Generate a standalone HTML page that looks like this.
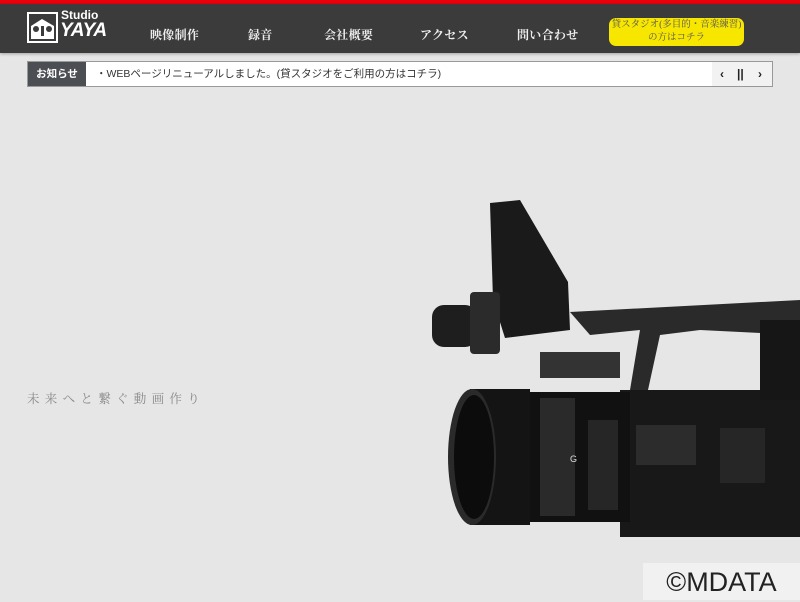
<!DOCTYPE html>
<html><head><meta charset="utf-8"><style>
*{margin:0;padding:0;box-sizing:border-box}
body{width:800px;height:600px;overflow:hidden;background:#e6e6e6;font-family:"Liberation Sans","Noto Sans CJK JP",sans-serif;position:relative}
.top{position:absolute;left:0;top:0;width:800px;height:4px;background:#e8000b}
.hdr{position:absolute;left:0;top:4px;width:800px;height:49px;background:#3b3b3b;box-shadow:0 1px 3px rgba(0,0,0,.3)}
.nav{position:absolute;top:26px;color:#eee;font-family:"Liberation Serif","Noto Serif CJK SC",serif;font-size:12px;font-weight:bold;letter-spacing:0.3px}
.btn{position:absolute;left:609px;top:18px;width:135px;height:28px;background:#f7e600;border-radius:7px;color:#555;font-family:"Liberation Serif","Noto Serif CJK SC",serif;font-size:9.5px;text-align:center;line-height:13px;padding-top:1px}
.ntc{position:absolute;left:27px;top:61px;width:746px;height:26px;background:#fff;border:1px solid #999}
.lab{position:absolute;left:0;top:0;width:58px;height:24px;background:#4b4e53;color:#fff;font-size:10.5px;font-weight:bold;text-align:center;line-height:24px}
.msg{position:absolute;left:68px;top:0;line-height:24px;font-size:10.5px;color:#333}
.ctl{position:absolute;right:0;top:0;width:60px;height:24px;background:#f2f2f2;font-size:12px;font-weight:bold;color:#222;line-height:24px}
.tag{position:absolute;left:27px;top:389px;font-family:"Liberation Serif","Noto Serif CJK SC",serif;font-size:12.5px;color:#888;letter-spacing:5.3px}
.cp{position:absolute;left:643px;top:563px;width:157px;height:37px;background:#f1f1f1;font-size:27px;color:#222;text-align:center;line-height:39px}
</style></head><body>
<div class="top"></div>
<div class="hdr">
<svg style="position:absolute;left:27px;top:8px" width="31" height="31" viewBox="0 0 31 31"><rect x="1" y="1" width="29" height="29" fill="none" stroke="#fff" stroke-width="2"/><path d="M4 14 L15 7 L27 14 L27 27 L4 27Z" fill="#fff"/><circle cx="9" cy="17" r="3" fill="#3b3b3b"/><circle cx="22" cy="17" r="3" fill="#3b3b3b"/><rect x="14" y="14" width="3" height="10" fill="#3b3b3b"/></svg>
<div style="position:absolute;left:61px;top:4px;color:#fff;font-size:12px;font-weight:bold">Studio</div>
<div style="position:absolute;left:60px;top:16px;color:#fff;font-size:19px;font-weight:bold;font-style:italic;letter-spacing:-0.5px">YAYA</div>
</div>
<div class="nav" style="left:150px">映像制作</div>
<div class="nav" style="left:248px">録音</div>
<div class="nav" style="left:324px">会社概要</div>
<div class="nav" style="left:420px">アクセス</div>
<div class="nav" style="left:517px">問い合わせ</div>
<div class="btn">貸スタジオ(多目的・音楽練習)<br>の方はコチラ</div>
<div class="ntc"><div class="lab">お知らせ</div><div class="msg">・WEBページリニューアルしました。(貸スタジオをご利用の方はコチラ)</div>
<div class="ctl"><span style="position:absolute;left:8px">&#8249;</span><span style="position:absolute;left:25px">||</span><span style="position:absolute;left:46px">&#8250;</span></div></div>
<div class="tag">未来へと繋ぐ動画作り</div>
<svg style="position:absolute;left:0;top:0" width="800" height="600">
<g fill="#1e1e1e">
<path d="M570 312 L800 300 L800 335 L700 330 L660 335 L648 390 L630 390 L640 330 L590 335Z" fill="#2a2a2a"/>
<rect x="540" y="352" width="80" height="26" fill="#333"/>
<path d="M490 203 L520 200 L568 282 L570 330 L505 338 L493 300Z" fill="#1a1a1a"/>
<rect x="432" y="305" width="45" height="42" rx="12"/>
<rect x="470" y="292" width="30" height="62" rx="4" fill="#2b2b2b"/>
<rect x="620" y="390" width="180" height="147" fill="#181818"/>
<rect x="760" y="320" width="40" height="80" fill="#161616"/>
<rect x="520" y="392" width="110" height="130" fill="#111"/>
<rect x="470" y="389" width="60" height="136" fill="#141414"/>
<ellipse cx="472" cy="457" rx="24" ry="68" fill="#2a2a2a"/>
<ellipse cx="474" cy="457" rx="20" ry="62" fill="#0c0c0c"/>
<rect x="540" y="398" width="35" height="118" fill="#2a2a2a"/>
<rect x="588" y="420" width="30" height="90" fill="#262626"/>
<rect x="636" y="425" width="60" height="40" fill="#2c2c2c"/>
<rect x="720" y="428" width="45" height="55" fill="#262626"/>
</g>
<text x="570" y="462" font-size="9" fill="#ddd" font-family="Liberation Sans">G</text>
</svg>
<div class="cp">©MDATA</div>
</body></html>
